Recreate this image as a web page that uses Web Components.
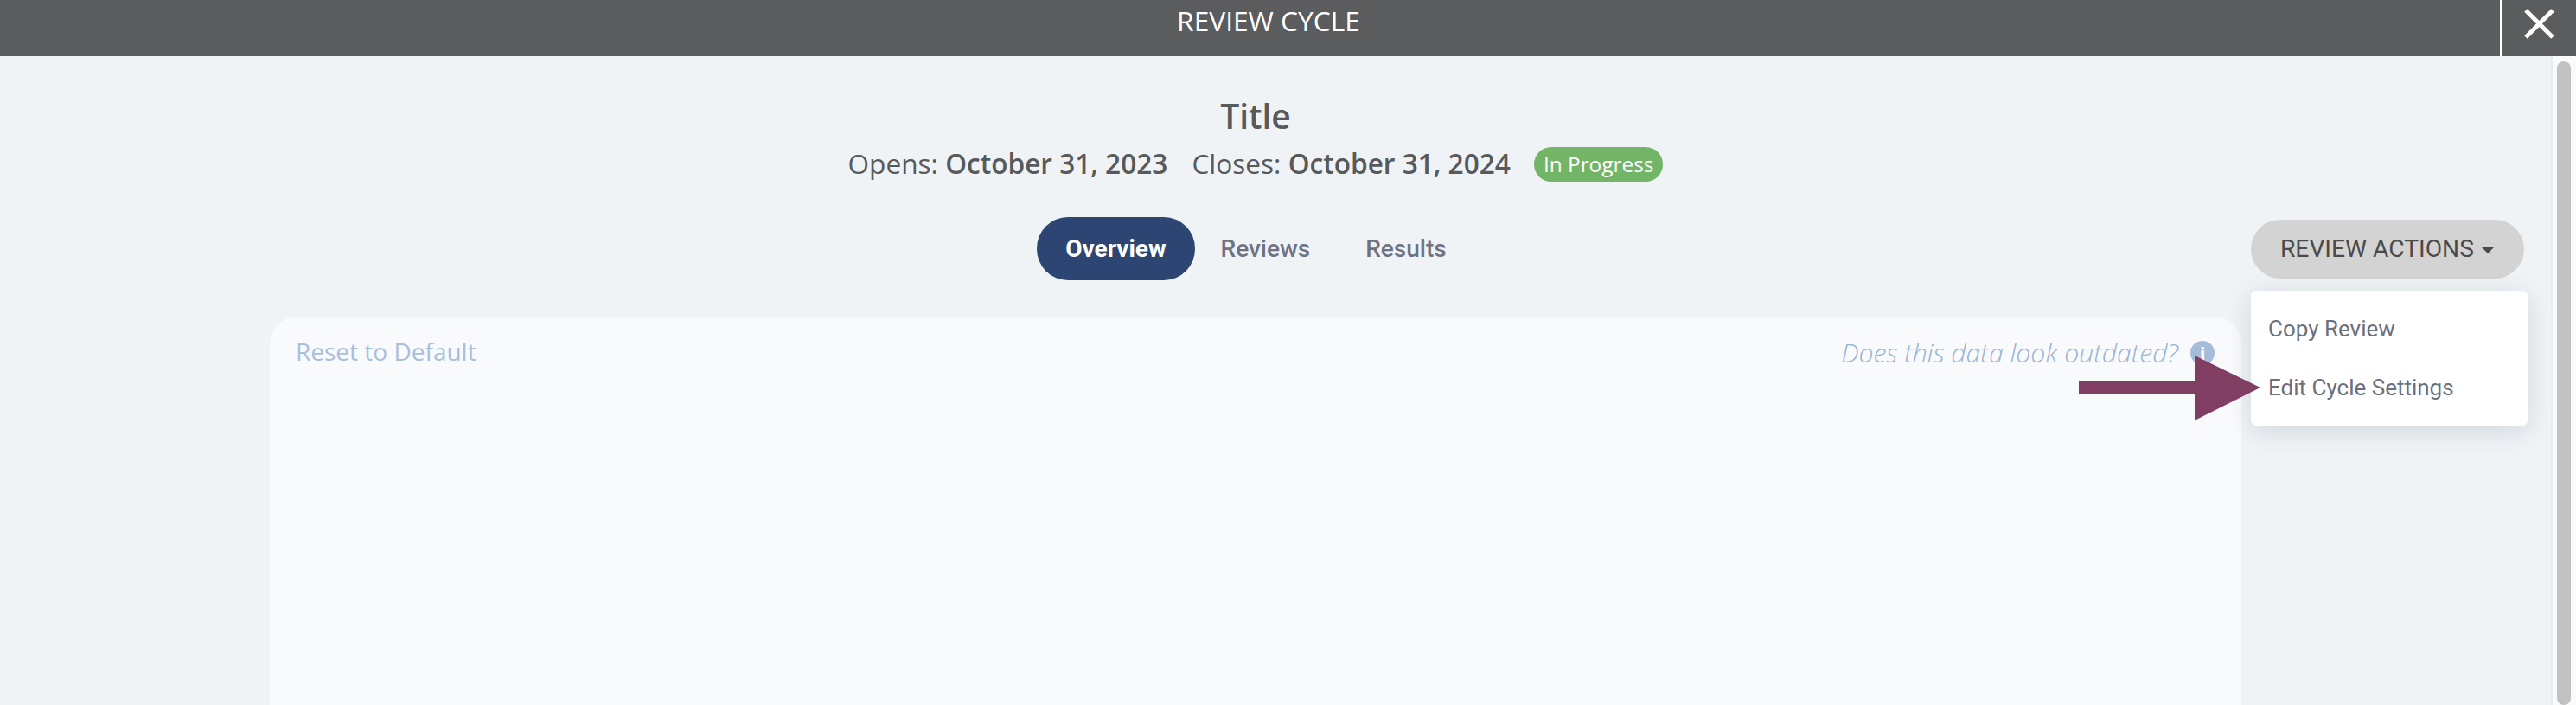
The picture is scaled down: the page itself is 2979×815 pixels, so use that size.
<!DOCTYPE html>
<html>
<head>
<meta charset="utf-8">
<title>Review Cycle</title>
<style>
    html, body { margin: 0; height: 100%; overflow: hidden; background: #eff3f6; }
</style>
</head>
<body>
<rc-app>
    <rc-header slot="header" label="REVIEW CYCLE"></rc-header>
    <rc-heading title-text="Title" opens="October 31, 2023" closes="October 31, 2024" status="In Progress"></rc-heading>
    <rc-toolbar>
        <rc-tab active>Overview</rc-tab>
        <rc-tab>Reviews</rc-tab>
        <rc-tab>Results</rc-tab>
        <rc-actions slot="actions" label="REVIEW ACTIONS">
            <rc-menu-item>Copy Review</rc-menu-item>
            <rc-menu-item>Edit Cycle Settings</rc-menu-item>
        </rc-actions>
    </rc-toolbar>
    <rc-card reset="Reset to Default" notice="Does this data look outdated?"></rc-card>
    <rc-arrow slot="overlay"></rc-arrow>
</rc-app>

<script>
class RcApp extends HTMLElement {
    constructor() {
        super();
        this.attachShadow({ mode: 'open' });
        this.shadowRoot.innerHTML = /*html*/`
            <style>
                :host {
                    display: flex;
                    flex-direction: column;
                    position: relative;
                    width: 100%;
                    height: 100vh;
                    overflow: hidden;
                    background-color: #eff3f6;
                }
                .body {
                    flex: 1;
                    display: flex;
                    min-height: 0;
                }
                main {
                    flex: 1;
                    min-width: 0;
                    padding: 42px 46px 0 0;
                    display: flex;
                    flex-direction: column;
                }
                .scrollbar {
                    width: 29px;
                    flex: none;
                    box-sizing: border-box;
                    padding: 6px 6px 0 5px;
                    background-color: #fafafa;
                    border-left: 2px solid #e9ecee;
                }
                .thumb {
                    width: 16px;
                    height: 100%;
                    margin-bottom: -20px;
                    border-radius: 8px;
                    background-color: #c1c1c1;
                }
            </style>
            <slot name="header"></slot>
            <div class="body">
                <main><slot></slot></main>
                <div class="scrollbar"><div class="thumb"></div></div>
            </div>
            <slot name="overlay"></slot>
        `;
    }
}

class RcHeader extends HTMLElement {
    constructor() {
        super();
        this.attachShadow({ mode: 'open' });
        this.shadowRoot.innerHTML = /*html*/`
            <style>
                :host {
                    display: flex;
                    flex: none;
                    height: 65px;
                    background-color: #5b5c5e;
                    color: #fff;
                }
                .label {
                    flex: 1;
                    padding-left: 43px;
                    text-align: center;
                    font: 400 31.7px/48px "Open Sans", sans-serif;
                }
                .close {
                    flex: none;
                    width: 86px;
                    height: 65px;
                    border-left: 2px solid #fff;
                    display: flex;
                    justify-content: center;
                }
                svg { margin-top: 9px; }
            </style>
            <div class="label" id="label"></div>
            <div class="close">
                <svg width="37" height="37" viewBox="0 0 37 37">
                    <path d="M3 3 L34 34 M34 3 L3 34" stroke="#fff" stroke-width="5" fill="none"/>
                </svg>
            </div>
        `;
    }

    connectedCallback() {
        this.shadowRoot.querySelector('#label').textContent = this.getAttribute('label');
    }
}

class RcHeading extends HTMLElement {
    constructor() {
        super();
        this.attachShadow({ mode: 'open' });
        this.shadowRoot.innerHTML = /*html*/`
            <style>
                :host {
                    display: block;
                    text-align: center;
                    font-family: "Open Sans", sans-serif;
                    color: #58595b;
                }
                h1 {
                    margin: 0 0 5px;
                    font-size: 39px;
                    line-height: 54px;
                    font-weight: 600;
                }
                .dates {
                    display: flex;
                    justify-content: center;
                    align-items: center;
                    height: 44px;
                    font-size: 31.6px;
                }
                b { font-weight: 600; }
                .closes { margin-left: 28px; }
                .status {
                    display: inline-block;
                    margin-left: 27px;
                    margin-top: 4px;
                    padding: 0 11px;
                    height: 40px;
                    line-height: 40px;
                    border-radius: 20px;
                    font-size: 24.4px;
                    color: #fff;
                    background-color: #72b566;
                }
            </style>
            <h1 id="title"></h1>
            <div class="dates">
                <span>Opens: <b id="opens"></b></span>
                <span class="closes">Closes: <b id="closes"></b></span>
                <span class="status" id="status"></span>
            </div>
        `;
    }

    connectedCallback() {
        this.shadowRoot.querySelector('#title').textContent = this.getAttribute('title-text');
        this.shadowRoot.querySelector('#opens').textContent = this.getAttribute('opens');
        this.shadowRoot.querySelector('#closes').textContent = this.getAttribute('closes');
        this.shadowRoot.querySelector('#status').textContent = this.getAttribute('status');
    }
}

class RcToolbar extends HTMLElement {
    constructor() {
        super();
        this.attachShadow({ mode: 'open' });
        this.shadowRoot.innerHTML = /*html*/`
            <style>
                :host {
                    display: grid;
                    grid-template-columns: 1fr auto 1fr;
                    align-items: center;
                    margin: 41px 0 42px;
                }
                .tabs {
                    grid-column: 2;
                    display: flex;
                }
                .actions {
                    grid-column: 3;
                    justify-self: end;
                    margin-right: -15px;
                }
            </style>
            <div class="tabs"><slot></slot></div>
            <div class="actions"><slot name="actions"></slot></div>
        `;
    }
}

class RcTab extends HTMLElement {
    constructor() {
        super();
        this.attachShadow({ mode: 'open' });
        this.shadowRoot.innerHTML = /*html*/`
            <style>
                :host {
                    display: block;
                    height: 73px;
                    padding: 0 32px;
                    border-radius: 36px;
                    font: 500 28px/73px Roboto, sans-serif;
                    color: #6f7280;
                }
                :host([active]) {
                    padding: 0 33px;
                    margin-right: -2px;
                    font-weight: 700;
                    color: #fff;
                    background-color: #2c4572;
                }
            </style>
            <slot></slot>
        `;
    }
}

class RcActions extends HTMLElement {
    constructor() {
        super();
        this.attachShadow({ mode: 'open' });
        this.shadowRoot.innerHTML = /*html*/`
            <style>
                :host {
                    display: block;
                    position: relative;
                }
                button {
                    display: flex;
                    align-items: center;
                    width: 316px;
                    height: 68px;
                    padding: 0 0 0 34px;
                    border: 0;
                    border-radius: 34px;
                    background-color: #d3d3d3;
                    color: #4a4a4a;
                    font: 400 28.2px Roboto, sans-serif;
                }
                .caret {
                    width: 0;
                    height: 0;
                    margin-left: 8px;
                    margin-top: 2px;
                    border-left: 8px solid transparent;
                    border-right: 8px solid transparent;
                    border-top: 8px solid #4a4a4a;
                }
                .menu {
                    position: absolute;
                    top: 82px;
                    left: 0;
                    width: 320px;
                    height: 156px;
                    box-sizing: border-box;
                    padding: 10px 0;
                    border-radius: 6px;
                    background-color: #fff;
                    box-shadow: 0 6px 28px rgba(60, 70, 85, 0.16);
                }
            </style>
            <button><span id="label"></span><span class="caret"></span></button>
            <div class="menu"><slot></slot></div>
        `;
    }

    connectedCallback() {
        this.shadowRoot.querySelector('#label').textContent = this.getAttribute('label');
    }
}

class RcMenuItem extends HTMLElement {
    constructor() {
        super();
        this.attachShadow({ mode: 'open' });
        this.shadowRoot.innerHTML = /*html*/`
            <style>
                :host {
                    display: block;
                    height: 68px;
                    padding-left: 20px;
                    font: 400 26px/68px Roboto, sans-serif;
                    color: #6c6f7d;
                }
            </style>
            <slot></slot>
        `;
    }
}

class RcCard extends HTMLElement {
    constructor() {
        super();
        this.attachShadow({ mode: 'open' });
        this.shadowRoot.innerHTML = /*html*/`
            <style>
                :host {
                    display: block;
                    flex: 1;
                    width: 2280px;
                    margin: 0 auto -40px;
                    box-sizing: border-box;
                    padding: 18px 32px 0 30px;
                    border-radius: 32px;
                    background-color: #f8fafc;
                    font-family: "Open Sans", sans-serif;
                    color: #a8bfdd;
                }
                .row {
                    display: flex;
                    justify-content: space-between;
                    align-items: center;
                }
                .reset { font-size: 28px; line-height: 40px; }
                .notice {
                    display: flex;
                    align-items: center;
                    margin-top: 3px;
                    font-size: 30.2px;
                    font-style: italic;
                    font-weight: 300;
                    color: #98b2d5;
                }
                .info {
                    width: 28px;
                    height: 28px;
                    margin-left: 14px;
                    margin-right: -1px;
                    border-radius: 50%;
                    background-color: #a5bcda;
                    color: #fff;
                    font: 700 22px/28px "Open Sans", sans-serif;
                    text-align: center;
                }
            </style>
            <div class="row">
                <span class="reset" id="reset"></span>
                <span class="notice"><span id="notice"></span><span class="info">i</span></span>
            </div>
        `;
    }

    connectedCallback() {
        this.shadowRoot.querySelector('#reset').textContent = this.getAttribute('reset');
        this.shadowRoot.querySelector('#notice').textContent = this.getAttribute('notice');
    }
}

// annotation drawn on top of the screenshot
class RcArrow extends HTMLElement {
    constructor() {
        super();
        this.attachShadow({ mode: 'open' });
        this.shadowRoot.innerHTML = /*html*/`
            <style>
                :host {
                    position: absolute;
                    left: 2404px;
                    top: 411px;
                    width: 210px;
                    height: 75px;
                }
                svg { display: block; }
            </style>
            <svg width="210" height="75" viewBox="0 0 210 75">
                <path d="M0 30 H134 V0 L210 37 L134 75 V45 H0 Z" fill="#803e62"/>
            </svg>
        `;
    }
}

customElements.define('rc-app', RcApp);
customElements.define('rc-header', RcHeader);
customElements.define('rc-heading', RcHeading);
customElements.define('rc-toolbar', RcToolbar);
customElements.define('rc-tab', RcTab);
customElements.define('rc-actions', RcActions);
customElements.define('rc-menu-item', RcMenuItem);
customElements.define('rc-card', RcCard);
customElements.define('rc-arrow', RcArrow);
</script>
</body>
</html>
